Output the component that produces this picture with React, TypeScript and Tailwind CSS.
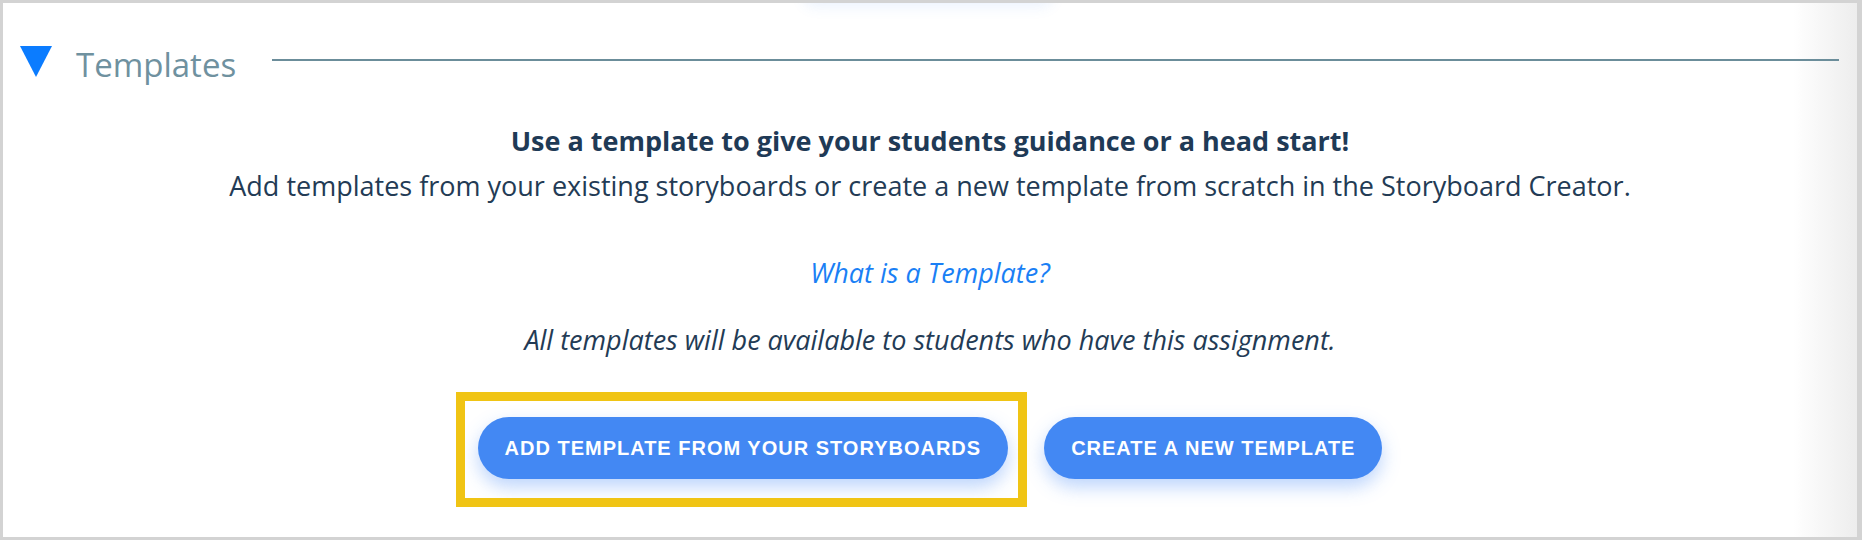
import React from "react";

export default function App() {
  return (
    <div className="w-[1862px] h-[540px] bg-[#d3d3d3] pt-[3px] pl-[3px] pr-[5px] pb-[3px] overflow-hidden">
      <div className="relative h-full overflow-hidden bg-[linear-gradient(to_right,#ffffff_calc(100%-64px),#ededed)] font-['Open_Sans',sans-serif]">
        <div className="absolute left-[800px] -top-[24px] w-[250px] h-[24px] rounded-full shadow-[0_4px_14px_rgba(66,135,245,0.10)]" />

        <div className="flex items-start pl-[17px] pr-[18px] mt-[43px]">
          <svg width="32" height="31" viewBox="0 0 32 31" className="shrink-0">
            <polygon points="0,0 32,0 16,31" fill="#0b7cff" />
          </svg>
          <span className="ml-[24px] mt-[1px] text-[33px] leading-[35px] text-[#6f919f]">Templates</span>
          <div className="flex-1 h-[2px] bg-[#6b8d9a] mt-[13px] ml-[36px]" />
        </div>

        <div className="flex flex-col items-center text-[27px] leading-[45px] text-[#233b55]">
          <p className="mt-[36px] font-bold text-[#1f3a56]">
            Use a template to give your students guidance or a head start!
          </p>
          <p>
            Add templates from your existing storyboards or create a new template from scratch in the Storyboard Creator.
          </p>
          <a className="mt-[42px] italic text-[#1a7ff5] cursor-pointer">What is a Template?</a>
          <p className="mt-[22px] italic">All templates will be available to students who have this assignment.</p>

          <div className="flex items-center gap-[36px] mt-[55px]">
            <div className="relative">
              <button className="h-[62px] px-[27px] rounded-full bg-[#4388f3] text-white font-['Liberation_Sans',Arial,sans-serif] font-bold text-[20px] tracking-[1px] leading-none shadow-[0_8px_18px_rgba(66,135,245,0.35)]">
                ADD TEMPLATE FROM YOUR STORYBOARDS
              </button>
              <div className="pointer-events-none absolute -left-[22px] -right-[19px] -top-[25px] -bottom-[28px] border-[9px] border-[#f0c414]" />
            </div>
            <button className="h-[62px] px-[27px] rounded-full bg-[#4388f3] text-white font-['Liberation_Sans',Arial,sans-serif] font-bold text-[20px] tracking-[1px] leading-none shadow-[0_8px_18px_rgba(66,135,245,0.35)]">
              CREATE A NEW TEMPLATE
            </button>
          </div>
        </div>
      </div>
    </div>
  );
}
